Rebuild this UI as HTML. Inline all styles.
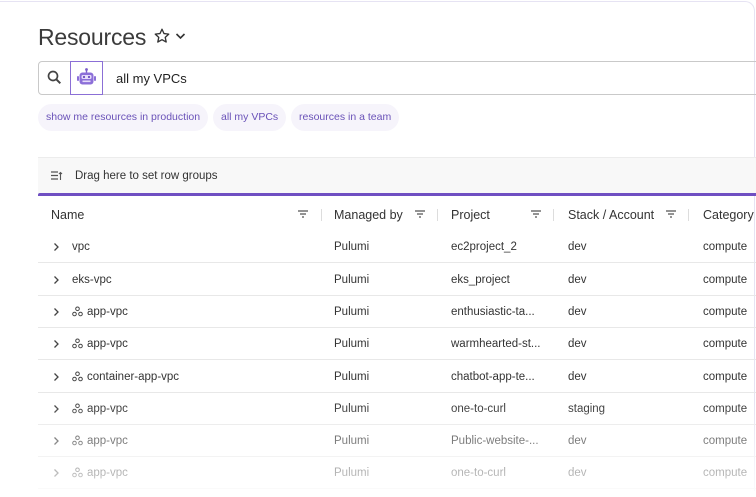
<!DOCTYPE html>
<html><head><meta charset="utf-8"><style>
*{box-sizing:border-box;margin:0;padding:0}
html,body{width:756px;height:497px;overflow:hidden}
body{background:#fff;font-family:"Liberation Sans",sans-serif;position:relative}
.frame{position:absolute;left:-10px;top:1px;width:765px;height:490px;border:1px solid #e6e3f3;border-bottom:none;border-top-right-radius:10px}
h1{position:absolute;left:38px;top:24px;font-size:23px;font-weight:400;color:#3b3b3b;letter-spacing:-.2px}
.star{position:absolute;left:153px;top:27px}
.chev{position:absolute;left:175px;top:32px}
.search{position:absolute;left:38px;top:61px;width:730px;height:34px;border:1px solid #c9c9c9;border-radius:4px}
.sicon{position:absolute;left:0;top:0;width:32px;height:32px}
.robot{position:absolute;left:31px;top:-1px;width:33px;height:34px;border:1px solid #8b6fd6}
.stext{position:absolute;left:77px;top:9px;font-size:13px;color:#222}
.chip{position:absolute;top:104px;height:27px;border-radius:14px;background:#f6f4fb;color:#6a52b8;font-size:10.5px;line-height:27px;padding:0 8px}
.group{position:absolute;left:38px;top:157px;width:730px;height:37px;background:#f8f8f8;border-top:1px solid #ececec}
.group span{position:absolute;left:37px;top:12px;font-size:11.5px;color:#333}
.pl{position:absolute;left:38px;top:193px;width:730px;height:3px;background:#6f4fc2;border-radius:2px 0 0 0}
.hd{position:absolute;top:208px;font-size:12.5px;color:#333}
.sep{position:absolute;top:209px;width:1px;height:12px;background:#ddd}
.flt{position:absolute;top:209px}
.row{position:absolute;left:38px;width:730px;height:32px;border-bottom:1px solid #e8e8e8;font-size:11.5px;color:#333}
.row div{position:absolute;top:10px;white-space:nowrap}
.row svg{position:absolute}
.fade{position:absolute;left:0;top:400px;width:756px;height:97px;background:linear-gradient(rgba(255,255,255,0),rgba(255,255,255,.85))}
</style></head><body>
<div class="frame"></div>
<h1>Resources</h1>
<svg class="star" width="18" height="18" viewBox="0 0 24 24"><path d="M12 3l2.7 5.8 6.3.7-4.7 4.3 1.3 6.2L12 16.9 6.4 20l1.3-6.2L3 9.5l6.3-.7z" fill="none" stroke="#333" stroke-width="1.8" stroke-linejoin="round"/></svg>
<svg class="chev" width="11" height="8" viewBox="0 0 11 8"><path d="M1.5 2l4 4 4-4" fill="none" stroke="#333" stroke-width="1.6"/></svg>
<div class="search">
<svg class="sicon" viewBox="0 0 32 32"><circle cx="14" cy="14" r="4.5" fill="none" stroke="#444" stroke-width="1.7"/><path d="M17.3 17.3l4 4" stroke="#444" stroke-width="2"/></svg>
<div class="robot"><svg width="31" height="32" viewBox="0 0 31 32"><circle cx="15.5" cy="7.5" r="1.4" fill="#7b5cc9"/><path d="M15.5 8v2.5" stroke="#7b5cc9" stroke-width="1.4"/><rect x="8.5" y="10.5" width="14" height="12" rx="3" fill="#8c6fd8"/><rect x="6" y="14" width="2" height="5" rx="1" fill="#8c6fd8"/><rect x="23" y="14" width="2" height="5" rx="1" fill="#8c6fd8"/><rect x="10.5" y="13" width="10" height="4" rx="1.2" fill="#e6dcfa"/><circle cx="13" cy="15" r="1.1" fill="#6a4cc0"/><circle cx="18" cy="15" r="1.1" fill="#6a4cc0"/><rect x="11.5" y="18.5" width="8" height="1.6" fill="#e6dcfa"/></svg></div>
<div class="stext">all my VPCs</div>
</div>
<div class="chip" style="left:38px">show me resources in production</div>
<div class="chip" style="left:213px">all my VPCs</div>
<div class="chip" style="left:291px">resources in a team</div>
<div class="group"><svg style="position:absolute;left:13px;top:13px" width="12" height="10" viewBox="0 0 12 10"><path d="M0 1h7M0 4.5h7M0 8h7" stroke="#555" stroke-width="1.2"/><path d="M9.5 9V1.5M8 3l1.5-1.5L11 3" fill="none" stroke="#555" stroke-width="1.1"/></svg><span>Drag here to set row groups</span></div>
<div class="pl"></div>
<div class="hd" style="left:51px">Name</div>
<div class="hd" style="left:334px">Managed by</div>
<div class="hd" style="left:451px">Project</div>
<div class="hd" style="left:568px">Stack / Account</div>
<div class="hd" style="left:703px">Category</div>
<svg class="flt" style="left:297px" width="12" height="10" viewBox="0 0 12 10"><path d="M1 2h10M3 5h6M5 8h2" stroke="#555" stroke-width="1.2"/></svg>
<svg class="flt" style="left:414px" width="12" height="10" viewBox="0 0 12 10"><path d="M1 2h10M3 5h6M5 8h2" stroke="#555" stroke-width="1.2"/></svg>
<svg class="flt" style="left:530px" width="12" height="10" viewBox="0 0 12 10"><path d="M1 2h10M3 5h6M5 8h2" stroke="#555" stroke-width="1.2"/></svg>
<svg class="flt" style="left:665px" width="12" height="10" viewBox="0 0 12 10"><path d="M1 2h10M3 5h6M5 8h2" stroke="#555" stroke-width="1.2"/></svg>
<div class="sep" style="left:321px"></div><div class="sep" style="left:437px"></div><div class="sep" style="left:553px"></div><div class="sep" style="left:688px"></div>

<svg width="0" height="0" style="position:absolute"><defs>
<symbol id="ch" viewBox="0 0 8 10"><path d="M2.5 1.5l3.5 3.5-3.5 3.5" fill="none" stroke="#444" stroke-width="1.3"/></symbol>
<symbol id="og" viewBox="0 0 11 11"><circle cx="5.5" cy="2.8" r="1.8" fill="none" stroke="#444" stroke-width="1"/><circle cx="2.5" cy="8" r="1.8" fill="none" stroke="#444" stroke-width="1"/><circle cx="8.5" cy="8" r="1.8" fill="none" stroke="#444" stroke-width="1"/></symbol>
</defs></svg>

<div class="row" style="top:231px"><svg style="left:14px;top:11px" width="8" height="10"><use href="#ch"/></svg><div style="left:34px">vpc</div><div style="left:296px">Pulumi</div><div style="left:413px">ec2project_2</div><div style="left:530px">dev</div><div style="left:665px">compute</div></div>
<div class="row" style="top:264px"><svg style="left:14px;top:11px" width="8" height="10"><use href="#ch"/></svg><div style="left:34px">eks-vpc</div><div style="left:296px">Pulumi</div><div style="left:413px">eks_project</div><div style="left:530px">dev</div><div style="left:665px">compute</div></div>
<div class="row" style="top:296px"><svg style="left:14px;top:11px" width="8" height="10"><use href="#ch"/></svg><svg style="left:34px;top:10px" width="11" height="11"><use href="#og"/></svg><div style="left:49px">app-vpc</div><div style="left:296px">Pulumi</div><div style="left:413px">enthusiastic-ta...</div><div style="left:530px">dev</div><div style="left:665px">compute</div></div>
<div class="row" style="top:328px"><svg style="left:14px;top:11px" width="8" height="10"><use href="#ch"/></svg><svg style="left:34px;top:10px" width="11" height="11"><use href="#og"/></svg><div style="left:49px">app-vpc</div><div style="left:296px">Pulumi</div><div style="left:413px">warmhearted-st...</div><div style="left:530px">dev</div><div style="left:665px">compute</div></div>
<div class="row" style="top:361px"><svg style="left:14px;top:11px" width="8" height="10"><use href="#ch"/></svg><svg style="left:34px;top:10px" width="11" height="11"><use href="#og"/></svg><div style="left:49px">container-app-vpc</div><div style="left:296px">Pulumi</div><div style="left:413px">chatbot-app-te...</div><div style="left:530px">dev</div><div style="left:665px">compute</div></div>
<div class="row" style="top:393px"><svg style="left:14px;top:11px" width="8" height="10"><use href="#ch"/></svg><svg style="left:34px;top:10px" width="11" height="11"><use href="#og"/></svg><div style="left:49px">app-vpc</div><div style="left:296px">Pulumi</div><div style="left:413px">one-to-curl</div><div style="left:530px">staging</div><div style="left:665px">compute</div></div>
<div class="row" style="top:425px"><svg style="left:14px;top:11px" width="8" height="10"><use href="#ch"/></svg><svg style="left:34px;top:10px" width="11" height="11"><use href="#og"/></svg><div style="left:49px">app-vpc</div><div style="left:296px">Pulumi</div><div style="left:413px">Public-website-...</div><div style="left:530px">dev</div><div style="left:665px">compute</div></div>
<div class="row" style="top:457px"><svg style="left:14px;top:11px" width="8" height="10"><use href="#ch"/></svg><svg style="left:34px;top:10px" width="11" height="11"><use href="#og"/></svg><div style="left:49px">app-vpc</div><div style="left:296px">Pulumi</div><div style="left:413px">one-to-curl</div><div style="left:530px">dev</div><div style="left:665px">compute</div></div>
<div class="fade"></div>
</body></html>
